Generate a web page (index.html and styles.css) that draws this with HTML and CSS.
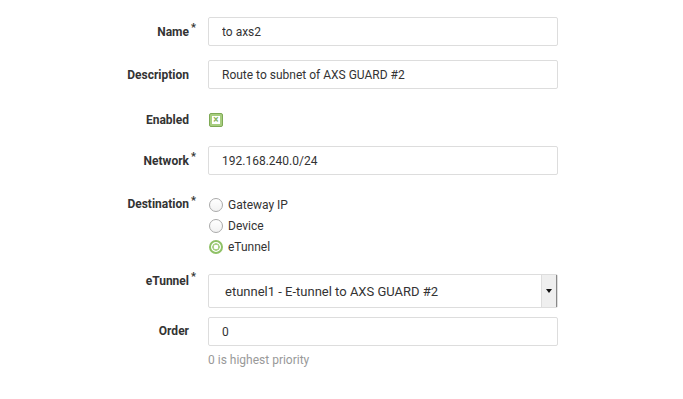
FILE: index.html
```html
<!DOCTYPE html>
<html lang="en">
<head>
    <meta charset="UTF-8">
    <title>Route</title>
    <link rel="stylesheet" href="styles.css">
</head>
<body>
    <form class="route-form">
        <div class="row">
            <label class="label required">Name</label>
            <div class="field"><input class="text-input" type="text" value="to axs2"></div>
        </div>

        <div class="row">
            <label class="label">Description</label>
            <div class="field"><input class="text-input" type="text" value="Route to subnet of AXS GUARD #2"></div>
        </div>

        <div class="row row-small">
            <label class="label">Enabled</label>
            <div class="field"><span class="checkbox"><span class="checkbox-mark">&#215;</span></span></div>
        </div>

        <div class="row">
            <label class="label required">Network</label>
            <div class="field"><input class="text-input" type="text" value="192.168.240.0/24"></div>
        </div>

        <!-- Destination radios -->
        <div class="row row-top">
            <label class="label required">Destination</label>
            <div class="field radios">
                <div class="radio-line"><span class="radio"></span>Gateway IP</div>
                <div class="radio-line"><span class="radio"></span>Device</div>
                <div class="radio-line"><span class="radio checked"></span>eTunnel</div>
            </div>
        </div>

        <div class="row row-select">
            <label class="label required">eTunnel</label>
            <div class="field">
                <div class="select">
                    <span class="select-text">etunnel1 - E-tunnel to AXS GUARD #2</span>
                    <span class="select-btn"><span class="select-arrow"></span></span>
                </div>
            </div>
        </div>

        <div class="row row-order">
            <label class="label">Order</label>
            <div class="field">
                <input class="text-input" type="text" value="0">
                <div class="help">0 is highest priority</div>
            </div>
        </div>
    </form>
</body>
</html>
```

FILE: styles.css
```css
body {
    margin: 0;
    padding: 0;
    background-color: #fff;
    font-family: Roboto, "Liberation Sans", sans-serif;
    font-size: 12px;
    color: #333;
}

.route-form {
    padding-top: 17px;
}

.row {
    display: grid;
    grid-template-columns: 189px 350px;
    column-gap: 19px;
    align-items: center;
    margin-bottom: 14px;
}

.row-small {
    height: 33px;
    margin-bottom: 10px;
}

.row-top {
    align-items: start;
    margin-top: 23px;
    margin-bottom: 20px;
}

.row-top .label,
.row-select .label {
    line-height: 13px;
}

.row-select {
    align-items: start;
    margin-bottom: 9px;
}

.row-select .label {
    padding-top: 1px;
}

.row-order {
    align-items: start;
}

.row-order .label {
    line-height: 29px;
}

.label {
    position: relative;
    text-align: right;
    font-weight: bold;
    color: #333;
}

.required::after {
    content: "*";
    position: absolute;
    left: 191px;
    top: -4px;
    font-size: 11px;
    line-height: 14px;
}

.text-input {
    display: block;
    box-sizing: border-box;
    width: 350px;
    height: 29px;
    margin: 0;
    padding: 0 13px;
    border: 1px solid #ddd;
    border-radius: 2px;
    font-family: Roboto, "Liberation Sans", sans-serif;
    font-size: 12px;
    color: #333;
    outline: none;
}

/* Green checkbox */
.checkbox {
    display: flex;
    align-items: center;
    justify-content: center;
    box-sizing: border-box;
    width: 14px;
    height: 14px;
    margin-left: 1px;
    background-color: #a7cd7f;
    border: 1px solid #7ea955;
    border-radius: 2px;
}

.checkbox-mark {
    display: flex;
    align-items: center;
    justify-content: center;
    width: 8px;
    height: 8px;
    background-color: #fff;
    color: #86b15b;
    font-size: 10px;
    font-weight: bold;
    line-height: 8px;
}

.radios {
    display: flex;
    flex-direction: column;
    gap: 7px;
}

.radio-line {
    display: flex;
    align-items: center;
    height: 14px;
    font-size: 12px;
    color: #333;
}

.radio {
    box-sizing: border-box;
    width: 14px;
    height: 14px;
    margin: 0 5px 0 1px;
    border: 1px solid #aaa;
    border-radius: 50%;
    background: linear-gradient(#fff, #f2f2f2);
}

.radio.checked {
    border: 2px solid #8fc166;
    background: radial-gradient(circle, #fff 0 2px, #a9d286 2.5px 3.5px, #fff 4px);
}

/* Select box */
.select {
    display: flex;
    box-sizing: border-box;
    width: 350px;
    height: 34px;
    border: 1px solid #ddd;
    border-radius: 2px;
}

.select-text {
    flex: 1;
    display: flex;
    align-items: center;
    padding-left: 16px;
    font-size: 13px;
    color: #333;
}

.select-btn {
    display: flex;
    align-items: center;
    justify-content: center;
    width: 14px;
    background-color: #efefef;
    border-left: 1px solid #ddd;
    border-right: 1px solid #888;
}

.select-arrow {
    width: 0;
    height: 0;
    border-left: 3px solid transparent;
    border-right: 3px solid transparent;
    border-top: 4px solid #111;
}

.help {
    margin-top: 7px;
    font-size: 12px;
    color: #999;
}
```
